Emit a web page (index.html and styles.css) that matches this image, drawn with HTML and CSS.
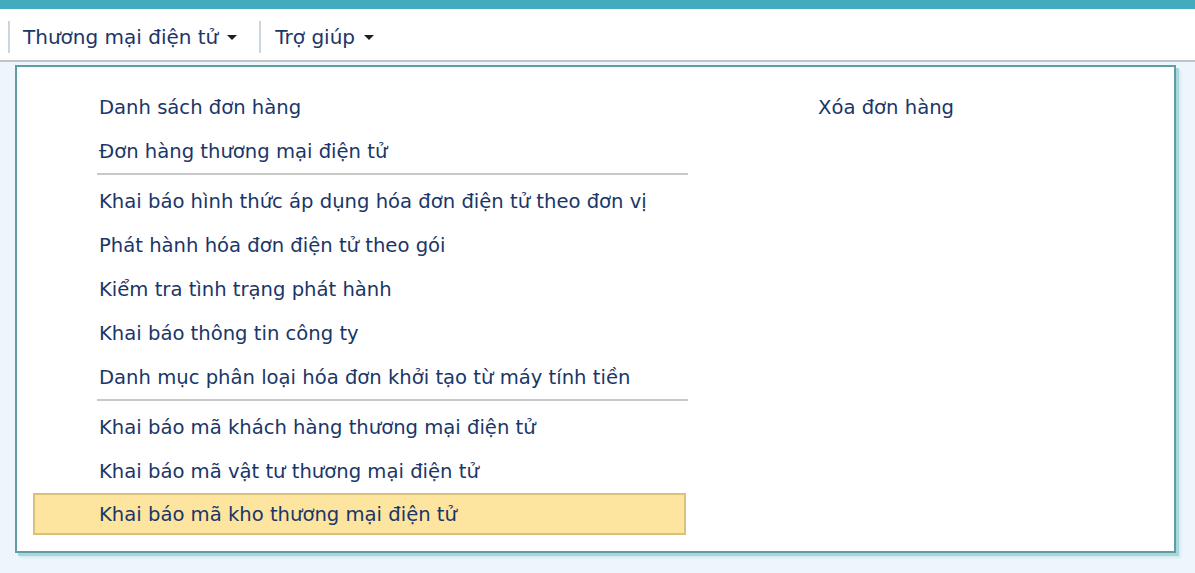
FILE: index.html
```html
<!DOCTYPE html>
<html lang="vi">
<head>
<meta charset="utf-8">
<title>Menu</title>
<link rel="stylesheet" href="styles.css">
</head>
<body>
<div class="topbar"></div>
<nav class="menubar">
  <div class="menu-item"><span>Thương mại điện tử</span><span class="caret"></span></div>
  <div class="menu-item"><span>Trợ giúp</span><span class="caret"></span></div>
</nav>
<div class="panel">
  <div class="col">
    <div class="item">Danh sách đơn hàng</div>
    <div class="item">Đơn hàng thương mại điện tử</div>
    <div class="sep"></div>
    <div class="item">Khai báo hình thức áp dụng hóa đơn điện tử theo đơn vị</div>
    <div class="item">Phát hành hóa đơn điện tử theo gói</div>
    <div class="item">Kiểm tra tình trạng phát hành</div>
    <div class="item">Khai báo thông tin công ty</div>
    <div class="item">Danh mục phân loại hóa đơn khởi tạo từ máy tính tiền</div>
    <div class="sep"></div>
    <div class="item">Khai báo mã khách hàng thương mại điện tử</div>
    <div class="item">Khai báo mã vật tư thương mại điện tử</div>
    <div class="item active">Khai báo mã kho thương mại điện tử</div>
  </div>
  <div class="col">
    <div class="item">Xóa đơn hàng</div>
  </div>
</div>
</body>
</html>
```
FILE: styles.css
```css
html, body {
  margin: 0;
  padding: 0;
}
body {
  background: #eef6fd;
  font-family: "DejaVu Sans", sans-serif;
  color: #1a3668;
  width: 1195px;
  height: 573px;
  overflow: hidden;
}
.topbar {
  height: 9px;
  background: #42abbe;
}
.menubar {
  height: 51px;
  background: #ffffff;
  border-bottom: 2px solid #c3c3c3;
  display: flex;
  align-items: center;
  padding-left: 8px;
  box-sizing: content-box;
}
.menu-item {
  display: flex;
  align-items: center;
  height: 32px;
  margin-top: 4px;
  border-left: 2px solid #ccd6de;
  padding: 0 22px 0 13px;
  font-size: 20px;
  color: #1a3668;
  gap: 9px;
}
.menu-item + .menu-item {
  padding-left: 14px;
}
.caret {
  width: 0;
  height: 0;
  border-left: 5px solid transparent;
  border-right: 5px solid transparent;
  border-top: 5px solid #1e1e1e;
  margin-top: 1px;
}
.panel {
  margin: 3px 0 0 15px;
  width: 1161px;
  height: 488px;
  background: #ffffff;
  border: 2px solid #5f9da2;
  box-shadow: 3px 3px 0 #a9d6dd, 5px 5px 2px #d3ecf1;
  box-sizing: border-box;
  display: grid;
  grid-template-columns: 653px 1fr;
  column-gap: 66px;
  padding: 18px 0 0 16px;
}
.col {
  display: flex;
  flex-direction: column;
}
.item {
  height: 44px;
  line-height: 44px;
  padding: 1px 0 0 66px;
  font-size: 19.6px;
  white-space: nowrap;
  box-sizing: border-box;
}
.sep {
  height: 2px;
  background: #c8c8c8;
  margin: 0 -2px 4px 64px;
}
.active {
  background: #fde49f;
  border: 2px solid #dcbf7d;
  height: 42px;
  line-height: 36px;
  padding: 2px 0 0 64px;
}
```
